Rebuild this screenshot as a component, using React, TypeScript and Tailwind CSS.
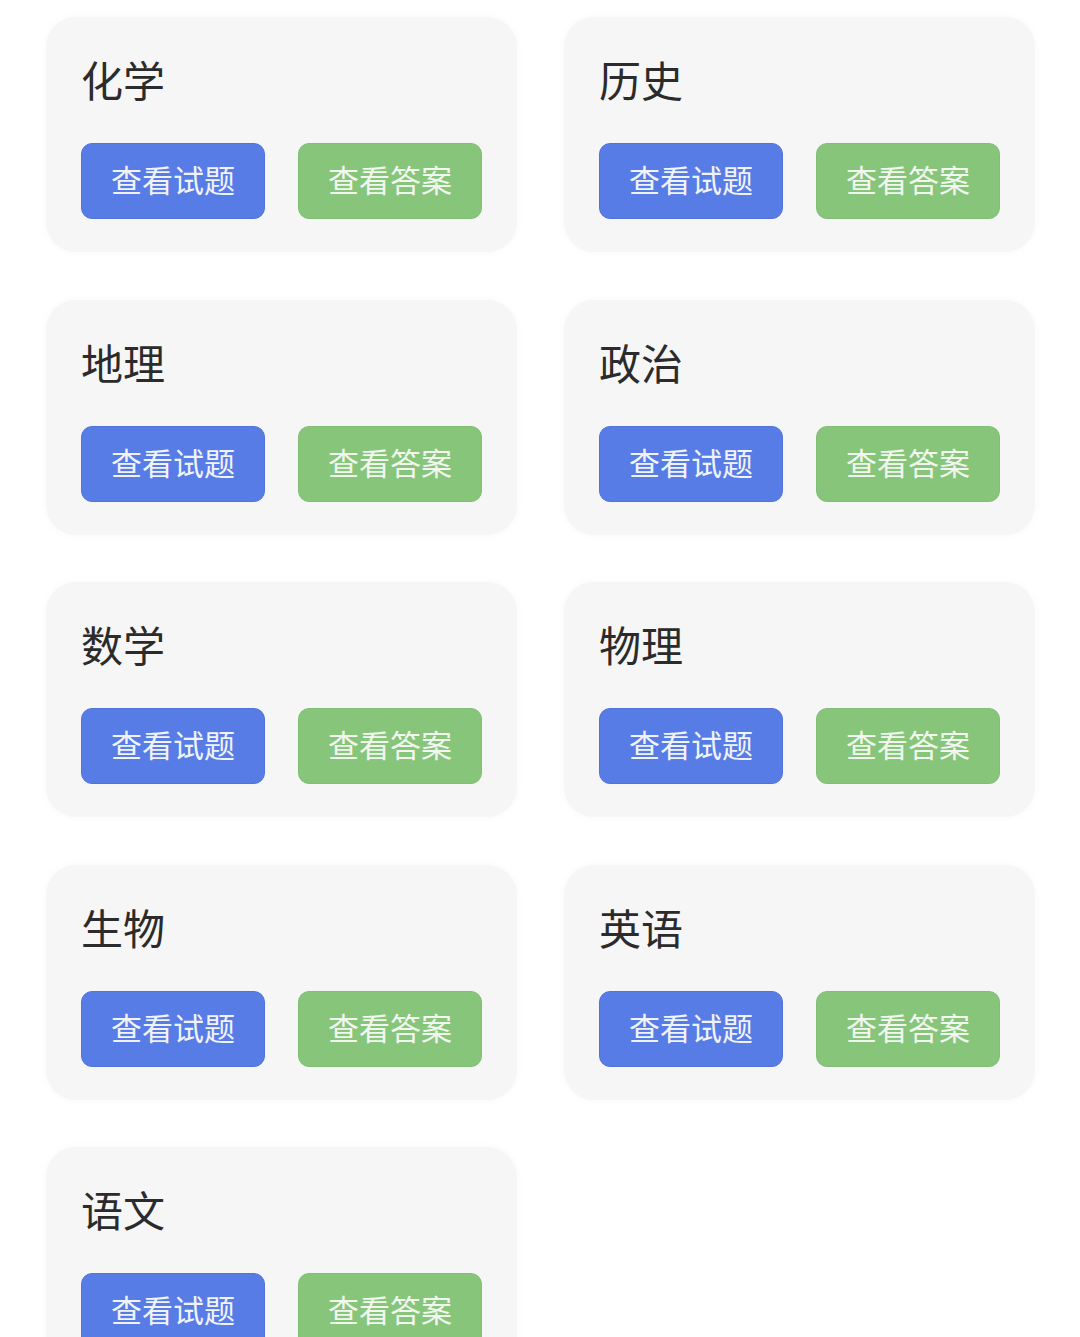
import React from "react";

const subjects = ["化学", "历史", "地理", "政治", "数学", "物理", "生物", "英语", "语文"];

function Card({ name }: { name: string }) {
  return (
    <div className="h-[235px] rounded-[30px] bg-[#f6f6f6] shadow-[0_0_8px_rgba(0,0,0,0.03)] pt-[37px] pl-[35px] pr-[34px]">
      <div className="text-[42px] leading-[50px] text-[#2b2b2b]">{name}</div>
      <div className="mt-[39px] flex gap-[33px]">
        <button className="flex h-[76px] w-[184px] items-center justify-center rounded-[11px] border border-[#5074dc] bg-[#587ce6] pb-[3px] text-[31px] text-[#f0f3fa]">
          查看试题
        </button>
        <button className="flex h-[76px] w-[184px] items-center justify-center rounded-[11px] border border-[#80bf74] bg-[#86c57a] pb-[3px] text-[31px] text-[#f1f7ef]">
          查看答案
        </button>
      </div>
    </div>
  );
}

export default function App() {
  return (
    <div
      className="h-[1337px] w-[1080px] overflow-hidden bg-white"
      style={{ fontFamily: '"Noto Sans CJK SC", "Noto Sans", sans-serif' }}
    >
      <div className="grid grid-cols-[471px_471px] gap-x-[47px] gap-y-[47.5px] pl-[46px] pt-[17px]">
        {subjects.map((s) => (
          <Card key={s} name={s} />
        ))}
      </div>
    </div>
  );
}
